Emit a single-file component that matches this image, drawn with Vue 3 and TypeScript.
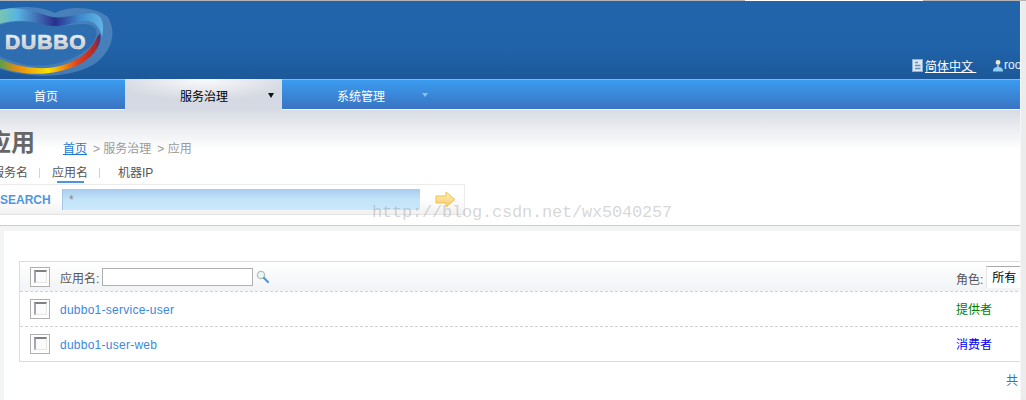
<script setup lang="ts">
interface AppRow {
  name: string
  role: string
  roleClass: string
}

const rows: AppRow[] = [
  { name: 'dubbo1-service-user', role: '提供者', roleClass: 'provider' },
  { name: 'dubbo1-user-web', role: '消费者', roleClass: 'consumer' }
]
</script>

<template>
  <div class="screen">
    <div class="top-line"></div>
    <div class="body-row">
      <div class="page">
        <header class="header">
          <svg class="logo" width="116" height="78" viewBox="0 0 116 78">
            <defs>
              <linearGradient id="ribbonTop" x1="0" y1="0" x2="1" y2="0">
                <stop offset="0" stop-color="#7fc9a8" />
                <stop offset="0.2" stop-color="#58b4e2" />
                <stop offset="0.55" stop-color="#2a2f8c" />
                <stop offset="0.8" stop-color="#3f8fd0" />
                <stop offset="1" stop-color="#62b4e4" />
              </linearGradient>
              <linearGradient id="ribbonBottom" x1="0" y1="0" x2="1" y2="0">
                <stop offset="0" stop-color="#3aa655" />
                <stop offset="0.2" stop-color="#e78a10" />
                <stop offset="0.5" stop-color="#fbe000" />
                <stop offset="0.78" stop-color="#e2401c" />
                <stop offset="0.95" stop-color="#b0282a" />
                <stop offset="1" stop-color="#2b3a90" />
              </linearGradient>
              <linearGradient id="logoText" x1="0" y1="0" x2="0" y2="1">
                <stop offset="0" stop-color="#ffffff" />
                <stop offset="1" stop-color="#b5b8bd" />
              </linearGradient>
            </defs>
            <path d="M-6 12 C10 4 40 4 55 12 C70 4 95 6 108 16 C116 30 114 48 96 62 C76 76 34 80 -6 66 Z" fill="#6d9ccb" fill-opacity="0.5" />
            <path d="M-6 26 C14 18 34 20 52 25 C72 26 88 18 96 28 C100 42 80 58 54 63 C30 68 8 60 -6 52 Z" fill="#2a6bae" fill-opacity="0.85" />
            <path d="M-4 10 C10 5 28 7 45 14 C60 20 72 13 92 12 C102 13 105 22 102 36 C100 26 94 18 82 20 C68 23 58 28 42 23 C26 18 10 19 -4 24 Z" fill="url(#ribbonTop)" />
            <path d="M-4 56 C10 64 30 68 48 67 C70 65 90 54 97 36 L100 32 C103 44 92 57 80 63 C60 73 30 78 -4 65 Z" fill="url(#ribbonBottom)" />
            <text class="logo-text" x="5" y="48" fill="url(#logoText)">DUBBO</text>
          </svg>
          <div class="header-links">
            <svg class="doc-icon" width="11" height="13" viewBox="0 0 11 13">
              <rect x="0.5" y="0.5" width="10" height="12" fill="#dce8f4" stroke="#8fb0d4" />
              <path d="M3 3.5h3M3 6.5h5.5M3 9.5h5.5" stroke="#5f8fc2" stroke-width="1.4" />
            </svg>
            <a class="lang">简体中文&nbsp;</a>
            <svg class="user-icon" width="12" height="13" viewBox="0 0 12 13">
              <circle cx="6" cy="3.5" r="2.4" fill="#f2e6c8" />
              <path d="M5 5h2v3H5z" fill="#9bb3c7" />
              <path d="M1 12.5 C1 9 3 8 6 8 C9 8 11 9 11 12.5Z" fill="#8fd0f2" />
            </svg>
            <span class="user">root</span>
          </div>
        </header>

        <nav class="nav">
          <a class="nav-item home">首页</a>
          <a class="nav-item active">
            服务治理
            <i class="caret"></i>
          </a>
          <a class="nav-item system">
            系统管理
            <i class="caret small"></i>
          </a>
        </nav>

        <section class="title-area">
          <div class="title-row">
            <h1>应用</h1>
            <div class="crumbs">
              <a>首页</a>
              <span>&gt; 服务治理</span>
              <span>&gt; 应用</span>
            </div>
          </div>
          <div class="tabs">
            <span class="tab first">服务名</span>
            <i class="sep"></i>
            <span class="tab current">应用名</span>
            <i class="sep"></i>
            <span class="tab last">机器IP</span>
          </div>
          <div class="search-box">
            <span class="search-label">SEARCH</span>
            <div class="search-input">*</div>
            <svg class="go" width="21" height="17" viewBox="0 0 21 17">
              <defs>
                <linearGradient id="goFill" x1="0" y1="0" x2="0" y2="1">
                  <stop offset="0" stop-color="#fff4b8" />
                  <stop offset="1" stop-color="#f9c56a" />
                </linearGradient>
              </defs>
              <path d="M1 5 H11 V1 L20 8.5 L11 16 V12 H1 Z" fill="url(#goFill)" stroke="#eec14f" />
            </svg>
          </div>
        </section>

        <section class="content">
          <div class="panel">
            <div class="table">
              <div class="row head">
                <span class="check"></span>
                <label>应用名:</label>
                <span class="filter"></span>
                <svg class="magnifier" width="13" height="13" viewBox="0 0 13 13">
                  <circle cx="5" cy="5" r="3.6" fill="#eef5f4" stroke="#a9c4c0" stroke-width="1.3" />
                  <path d="M8 8l4 4" stroke="#4f97d4" stroke-width="2.2" stroke-linecap="round" />
                </svg>
                <div class="role-cell">
                  <label class="role-label">角色:</label>
                  <span class="select">所有</span>
                </div>
              </div>
              <div v-for="row in rows" :key="row.name" class="row">
                <span class="check"></span>
                <a class="app-name">{{ row.name }}</a>
                <div class="role-cell">
                  <span :class="row.roleClass">{{ row.role }}</span>
                </div>
              </div>
            </div>
            <div class="total">共 2 条</div>
          </div>
        </section>
      </div>
      <div class="scrollbar"></div>
    </div>
    <div class="watermark">http://blog.csdn.net/wx5040257</div>
  </div>
</template>

<style>
html,
body {
  margin: 0;
  background: #fff;
}
</style>

<style scoped>
.screen {
  position: relative;
  width: 1026px;
  height: 400px;
  overflow: hidden;
  font-family: "Liberation Sans", "Noto Sans CJK SC", sans-serif;
  font-size: 12px;
}

.top-line {
  height: 1px;
  background: linear-gradient(90deg, #b4b4b4 745px, #fff 745px, #fff 923px, #b4b4b4 923px);
}

.body-row {
  display: flex;
  height: 399px;
}

.page {
  width: 1020px;
  flex: none;
  overflow: hidden;
  display: flex;
  flex-direction: column;
}

.scrollbar {
  flex: 1;
  background: #ececec;
  border-left: 1px solid #f6f6f6;
}

.header {
  height: 78px;
  flex: none;
  display: flex;
  align-items: flex-end;
  justify-content: space-between;
  background: linear-gradient(#2164ab 0, #2063a9 60%, #1c5899 100%);
}

.logo {
  flex: none;
  display: block;
}

.logo-text {
  font-family: "Liberation Sans", sans-serif;
  font-weight: 700;
  font-size: 21px;
  letter-spacing: 0.9px;
  stroke: #dfe2e6;
  stroke-width: 0.7;
}

.header-links {
  width: 108px;
  display: flex;
  align-items: center;
  height: 14px;
  margin-bottom: 7px;
  color: #fff;
  white-space: nowrap;
}

.doc-icon {
  flex: none;
}

.lang {
  margin-left: 2px;
  text-decoration: underline;
  color: #fff;
  width: 53px;
  flex: none;
  white-space: pre;
}

.user-icon {
  margin-left: 14px;
  flex: none;
}

.user {
  color: #eaf3ff;
}

.nav {
  height: 31px;
  flex: none;
  display: flex;
  box-sizing: border-box;
  border-top: 1px solid #7dbaf2;
  border-bottom: 1px solid #f4f6f8;
  background: linear-gradient(#3a9cf0, #3b73c2);
}

.nav-item {
  flex: none;
  display: flex;
  align-items: center;
  color: #fff;
  padding-top: 2px;
}

.home {
  width: 125px;
  padding-left: 34px;
  box-sizing: border-box;
}

.active {
  width: 157px;
  height: 31px;
  margin-top: -1px;
  padding-left: 55px;
  box-sizing: border-box;
  color: #000;
  position: relative;
  background: radial-gradient(ellipse 90px 22px at 50% 0, #fafbfc, #dcdfe6 80%, #d4d9e3);
}

.system {
  padding-left: 55px;
  position: relative;
  width: 160px;
  box-sizing: border-box;
}

.caret {
  position: absolute;
  left: 143px;
  top: 14px;
  border: 3.5px solid transparent;
  border-top: 5px solid #111;
  border-bottom: 0;
}

.caret.small {
  left: 140px;
  top: 13px;
  border-width: 3px;
  border-top: 4px solid #8cc2f2;
  border-bottom: 0;
}

.title-area {
  flex: none;
  height: 116px;
  box-sizing: border-box;
  border-bottom: 1px solid #cdcdcd;
  background: linear-gradient(#d8dbe3 0, #eceef1 20px, #fff 40px);
}

.title-row {
  display: flex;
  align-items: flex-end;
  height: 49px;
  margin-left: -13px;
}

h1 {
  margin: 0;
  font-size: 24px;
  line-height: 32px;
  font-weight: 700;
  color: #666;
}

.crumbs {
  display: flex;
  gap: 6px;
  margin-left: 28px;
  margin-bottom: 2px;
  color: #999;
  line-height: 16px;
}

.crumbs a {
  color: #1e78d2;
  text-decoration: underline;
}

.tabs {
  display: flex;
  align-items: flex-end;
  height: 25px;
  padding-bottom: 2px;
  box-sizing: border-box;
  margin-left: -8px;
  color: #555;
}

.tab {
  position: relative;
  line-height: 18px;
}

.sep {
  width: 1px;
  height: 10px;
  background: #d9d2c4;
  margin: 0 12px 4px 11px;
}

.current::after {
  content: "";
  position: absolute;
  left: 5px;
  right: 4px;
  bottom: -1px;
  height: 2px;
  background: #4b95e0;
}

.last {
  margin-left: 6px;
}

.search-box {
  display: flex;
  align-items: center;
  width: 466px;
  height: 31px;
  margin-left: -1px;
  box-sizing: border-box;
  border: 1px solid #ebebeb;
  border-bottom-color: #e4e4e4;
  background: linear-gradient(#fff 45%, #f1f1f1);
}

.search-label {
  width: 62px;
  flex: none;
  box-sizing: border-box;
  font-size: 12px;
  font-weight: 700;
  color: #4f97e2;
}

.search-input {
  width: 358px;
  height: 21px;
  flex: none;
  box-sizing: border-box;
  padding: 3px 0 0 6px;
  color: #888;
  line-height: 16px;
  border-left: 1px solid #a4c5e4;
  background: linear-gradient(#a8ccef, #c2e3f8 50%, #cbe9fc);
}

.go {
  margin-left: 15px;
  flex: none;
}

.content {
  flex: 1;
  padding: 5px 0 0 4px;
  background: #f3f4f4;
}

.panel {
  height: 100%;
  background: #fff;
  padding: 30px 0 0 15px;
  box-sizing: border-box;
  position: relative;
}

.table {
  width: 1020px;
  box-sizing: border-box;
  border: 1px solid #dcdcdc;
}

.row {
  height: 35px;
  display: flex;
  align-items: center;
  padding-left: 10px;
  box-sizing: border-box;
  border-bottom: 1px dashed #d2d2d2;
}

.row:last-child {
  height: 34px;
  border-bottom: 0;
}

.head {
  height: 30px;
  background: linear-gradient(#fff, #f1f3f6);
  color: #555;
}

.head > label {
  padding-top: 2px;
}

.check {
  width: 20px;
  height: 20px;
  flex: none;
  box-sizing: border-box;
  border: 1px solid #b0b0b0;
  background: #fff;
  position: relative;
  margin-right: 10px;
}

.check::after {
  content: "";
  position: absolute;
  left: 3px;
  top: 2px;
  width: 10px;
  height: 10px;
  border-top: 2px solid #808080;
  border-left: 2px solid #a9a4b4;
  border-right: 1px solid #e6e6e6;
  border-bottom: 1px solid #e6e6e6;
  background: #fbfbfb;
}

.filter {
  width: 151px;
  height: 18px;
  flex: none;
  box-sizing: border-box;
  margin-left: 3px;
  border: 1px solid #b0b0b0;
  background: #fff;
}

.magnifier {
  margin-left: 3px;
  flex: none;
}

.app-name {
  padding-top: 2px;
  color: #3c87e0;
  letter-spacing: 0.25px;
}

.role-cell {
  position: absolute;
  left: 952px;
  display: flex;
  align-items: center;
  white-space: nowrap;
}

.role-label {
  padding-top: 4px;
}

.select {
  width: 60px;
  height: 22px;
  margin-left: 3px;
  padding-left: 5px;
  box-sizing: border-box;
  line-height: 22px;
  color: #000;
  background: #fff;
  border-top: 1px solid #aaa;
  border-left: 1px solid #e4e4e4;
}

.provider,
.consumer {
  margin-bottom: 2px;
}

.provider {
  color: #008000;
}

.consumer {
  color: #0000ff;
}

.total {
  position: absolute;
  left: 1002px;
  top: 140px;
  color: #2f76bb;
  white-space: nowrap;
}

.watermark {
  position: absolute;
  left: 372px;
  top: 203px;
  font-family: "Liberation Mono", monospace;
  font-size: 17px;
  letter-spacing: -0.2px;
  color: rgba(140, 140, 140, 0.36);
  white-space: nowrap;
  pointer-events: none;
}
</style>
